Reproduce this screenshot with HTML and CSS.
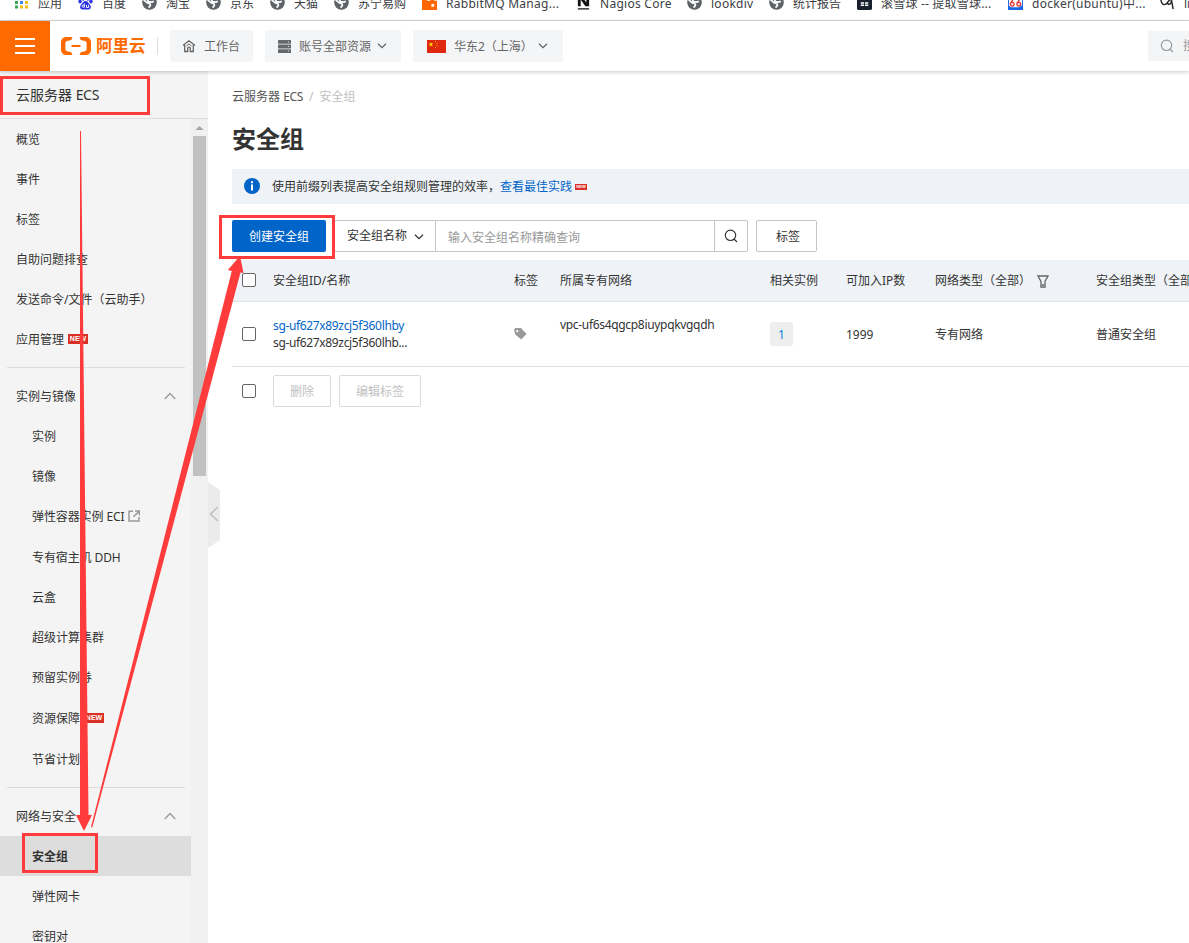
FILE: index.html
```
<!DOCTYPE html>
<html lang="zh-CN">
<head>
<meta charset="utf-8">
<title>安全组</title>
<link rel="stylesheet" href="styles.css">
</head>
<body>
<svg class="defs" width="0" height="0">
  <symbol id="globe" viewBox="0 0 16 16"><circle cx="8" cy="8" r="7.800" fill="#5f6368"/><path d="M1.500 5.500c2 0 2.500 2.500 4.500 3s3 .5 3 2-1.500 1.500-1.500 3M12.500 6.500c-1.500 1.500-3 1-4.500.8S5.500 6 6.500 4.500s2-1 2.500-3" fill="none" stroke="#fff" stroke-width="1.900"/></symbol>
  <symbol id="down" viewBox="0 0 10 6"><path d="M1 .7l4 4 4-4" fill="none" stroke="currentColor" stroke-width="1.300"/></symbol>
  <symbol id="up" viewBox="0 0 12 8"><path d="M.7 7L6 1.500 11.300 7" fill="none" stroke="#999" stroke-width="1.300"/></symbol>
  <symbol id="search" viewBox="0 0 14 14"><circle cx="6.500" cy="6.300" r="5.200" fill="none" stroke="currentColor" stroke-width="1.200"/><path d="M10 10l3 3" stroke="currentColor" stroke-width="1.300"/></symbol>
</svg>

<div class="bookmarks">
  <div class="bm"><svg class="ico" viewBox="0 0 15 15"><path d="M1 1h3v3H1zM1 6h3v3H1zM1 10.500h3v3H1z" fill="#34a853"/><path d="M6 1h3v3H6zM6 6h3v3H6z" fill="#4285f4"/><path d="M6 10.500h3v3H6zM11 1h3v3h-3zM11 6h3v3h-3zM11 10.500h3v3h-3z" fill="#f9b916"/></svg><span>应用</span></div>
  <div class="bm"><svg class="ico" viewBox="0 0 16 16"><g fill="#2b32e1"><ellipse cx="5.500" cy="3.500" rx="1.800" ry="2.500"/><ellipse cx="10.500" cy="3.500" rx="1.800" ry="2.500"/><ellipse cx="2.200" cy="7" rx="1.800" ry="2"/><ellipse cx="13.800" cy="7" rx="1.800" ry="2"/><path d="M8 6.500c2 0 3 2 4.500 3.500 2 2 1.500 5.500-1.500 5.500H5C2 15.500 1.500 12 3.500 10 5 8.500 6 6.500 8 6.500z"/></g><path d="M6.800 9v4H5.500a1 1 0 010-2.300h1M9 10.500v2.800h2.300v-2.800" stroke="#fff" fill="none"/></svg><span>百度</span></div>
  <div class="bm"><svg class="ico"><use href="#globe"/></svg><span>淘宝</span></div>
  <div class="bm"><svg class="ico"><use href="#globe"/></svg><span>京东</span></div>
  <div class="bm"><svg class="ico"><use href="#globe"/></svg><span>天猫</span></div>
  <div class="bm w88"><svg class="ico"><use href="#globe"/></svg><span>苏宁易购</span></div>
  <div class="bm w154"><svg class="ico" viewBox="0 0 16 16"><path d="M0 0h5v6h4V0h4v6h3v10H0z" fill="#f60"/><path d="M10 9.500h3v3h-3z" fill="#fff"/></svg><span class="lat">RabbitMQ Manag...</span></div>
  <div class="bm w111"><svg class="ico" viewBox="0 0 16 16"><path d="M2 1h4l5 7V1h3v11h-4L5 5v7H2zM2 14h12v1.500H2z" fill="#111"/></svg><span class="lat">Nagios Core</span></div>
  <div class="bm w82"><svg class="ico"><use href="#globe"/></svg><span class="lat">lookdiv</span></div>
  <div class="bm w88"><svg class="ico"><use href="#globe"/></svg><span>统计报告</span></div>
  <div class="bm w151"><svg class="ico" viewBox="0 0 16 16"><rect width="16" height="16" rx="2" fill="#17202c"/><path d="M4 8.500h3.500M8.500 8.500H12M4 11h3.500M8.500 11H12" stroke="#fff" stroke-width="1.500"/></svg><span class="snow">滚雪球 -- 提取雪球...</span></div>
  <div class="bm w152"><svg class="ico" viewBox="0 0 16 16"><path d="M0 0h16v16H0z" fill="#1766e5"/><path d="M1 3h14v8l-3 2H3l-2-2z" fill="#fff"/><path d="M6 4L2.500 9c0 4 4 3 4 .5S3 8 2.500 9M13 4L9.500 9c0 4 4 3 4 .5S10 8 9.500 9" fill="none" stroke="#e4393c" stroke-width="1.500"/></svg><span class="lat">docker(ubuntu)中...</span></div>
  <div class="bm"><svg class="ico" viewBox="0 0 16 16"><path d="M1 5c1 7 5 6 7 3l4-5M8 8c0 3 3 2 4 0l0-4 2 11" fill="none" stroke="#222" stroke-width="1.500"/></svg><span>li</span></div>
</div>

<header class="top">
  <div class="burger"><i></i><i></i><i></i></div>
  <div class="logo">
    <svg width="30" height="20" viewBox="0 0 30 20"><g fill="#ff6a00"><path d="M11.500 1H5.500A5 5 0 000 6v8a5 5 0 005.500 5h6l-1.200-2.800-4.300-1a2 2 0 01-1.600-2V6.800A2 2 0 016 4.900l4.300-1zM18.500 1h6A5 5 0 0130 6v8a5 5 0 01-5.500 5h-6l1.200-2.800 4.300-1a2 2 0 001.600-2V6.800A2 2 0 0024 4.900l-4.300-1z"/><path d="M10.500 9h9v2h-9z"/></g></svg>
    <span>阿里云</span>
  </div>
  <div class="chip home"><svg width="14" height="14" viewBox="0 0 14 14"><path d="M1 6.500L7 1.800l6 4.700M2.700 6v6.500h3V9.500a1.300 1.300 0 012.600 0v3h3V6" fill="none" stroke="#666" stroke-width="1.300"/><path d="M4.500 7L7 5l2.500 2" fill="none" stroke="#666"/></svg><span>工作台</span></div>
  <div class="chip account"><svg width="13" height="13" viewBox="0 0 13 13"><g fill="#66686b"><rect width="13" height="3.800" rx=".5"/><rect y="4.600" width="13" height="3.800" rx=".5"/><rect y="9.200" width="13" height="3.800" rx=".5"/></g><path d="M10 2h1M10 6.500h1M10 11h1" stroke="#ddd"/></svg><span>账号全部资源</span><svg class="dn"><use href="#down"/></svg></div>
  <div class="chip region"><svg width="19" height="13" viewBox="0 0 19 13"><path d="M0 0h19v13H0z" fill="#de2910"/><path d="M4 2l.6 1.600h1.700L5 4.700l.5 1.700L4 5.400 2.500 6.400 3 4.700 1.700 3.600h1.700z" fill="#ffde00"/><path d="M8 1.500h1M9.500 3.500h1M9.500 5.500h1M8 7.500h1" stroke="#ffb000"/></svg><span>华东2（上海）</span><svg class="dn"><use href="#down"/></svg></div>
  <div class="find"><svg width="14" height="14"><use href="#search"/></svg><span>搜索</span></div>
</header>

<div class="body">
  <aside>
    <div class="product">云服务器 <span>ECS</span></div>
    <div class="side-row">
      <nav>
        <a>概览</a><a>事件</a><a>标签</a><a>自助问题排查</a><a>发送命令/文件（云助手）</a><a>应用管理<b class="new">NEW</b></a>
        <hr>
        <a class="group">实例与镜像<svg width="12" height="8"><use href="#up"/></svg></a>
        <div class="sub">
          <a>实例</a><a>镜像</a>
          <a class="eci">弹性容器实例 ECI<svg width="12" height="12" viewBox="0 0 12 12"><path d="M5 1.200H1v9.800h10V7" fill="none" stroke="#999" stroke-width="1.500"/><path d="M7 1h4.300v4.300M11 1.200L5.500 6.800" fill="none" stroke="#999" stroke-width="1.500"/></svg></a>
          <a class="tall tight">专有宿主机 DDH</a><a>云盒</a><a>超级计算集群</a><a>预留实例券</a><a class="tall">资源保障<b class="new">NEW</b></a><a class="tall">节省计划</a>
        </div>
        <hr class="second">
        <a class="group">网络与安全<svg width="12" height="8"><use href="#up"/></svg></a>
        <div class="sub"><a class="active">安全组</a><a>弹性网卡</a><a>密钥对</a></div>
      </nav>
      <div class="scroll"><svg width="17" height="17" viewBox="0 0 17 17"><path d="M4.500 11l4-4 4 4z" fill="#a3a3a3"/></svg><div class="thumb"></div></div>
    </div>
  </aside>
  <svg class="fold" width="12" height="66" viewBox="0 0 12 66"><path d="M0 0l12 8v50L0 66z" fill="#ebebeb"/><path d="M10 25L2.500 32 10 39" fill="none" stroke="#bbb" stroke-width="1.300"/></svg>

  <main>
    <div class="crumb">云服务器 <span>ECS</span><i>/</i><em>安全组</em></div>
    <h1>安全组</h1>
    <div class="notice"><svg width="16" height="16" viewBox="0 0 16 16"><circle cx="8" cy="8" r="8" fill="#0064c8"/><path d="M7 3.200h2v2H7zM7 6.500h2v6H7z" fill="#fff"/></svg><span>使用前缀列表提高安全组规则管理的效率，</span><a>查看最佳实践</a><b class="new mini">NEW</b></div>
    <div class="tools">
      <button class="primary">创建安全组</button>
      <div class="select">安全组名称<svg class="dn"><use href="#down"/></svg></div>
      <div class="input">输入安全组名称精确查询</div>
      <div class="go"><svg width="14" height="14"><use href="#search"/></svg></div>
      <button class="tagbtn">标签</button>
    </div>
    <div class="grid head">
      <i class="box"></i><span>安全组ID/名称</span><span>标签</span><span>所属专有网络</span><span>相关实例</span><span>可加入IP数</span>
      <span class="filter">网络类型（全部）<svg width="12" height="13" viewBox="0 0 12 13"><path d="M1 1h10L8 6.500V12H4V6.500z" fill="none" stroke="#666" stroke-width="1.300"/><path d="M3.500 9h5v3.500h-5z" fill="#888"/></svg></span><span>安全组类型（全部）</span>
    </div>
    <div class="grid data">
      <i class="box"></i>
      <span class="ids"><a>sg-uf627x89zcj5f360lhby</a><br>sg-uf627x89zcj5f360lhb...</span>
      <span class="tag"><svg width="13" height="12" viewBox="0 0 13 12"><path d="M1.500 0H7l5.500 6L7.200 11.500 1.300 6.500 0 1.500z" fill="#999"/><circle cx="3.300" cy="3.200" r="1.100" fill="#fff"/></svg></span>
      <span class="vpc">vpc-uf6s4qgcp8iuypqkvgqdh</span><span><b class="count">1</b></span><span class="cell">1999</span><span class="cell">专有网络</span><span class="cell">普通安全组</span>
    </div>
    <div class="batch"><i class="box"></i><button>删除</button><button>编辑标签</button></div>
  </main>
</div>

<svg class="marks" width="1189" height="943" viewBox="0 0 1189 943">
  <g fill="none" stroke="#ff3b3b" stroke-width="3"><path d="M1.500 77.500h147v36H1.500zM220.500 216.500h113v41h-113zM23.500 834.500h73v37h-73z"/></g>
  <g fill="#ff3b3b"><path d="M80 131h1l7.500 684H92l-8 16-8-16h4z"/><path d="M91 827L231.800 271l-4-1L240 256l3.500 17-3-.5L92.300 827.500z"/></g>
</svg>
</body>
</html>
```
FILE: styles.css
```
* { box-sizing: border-box; }
body { margin: 0; width: 1189px; height: 943px; overflow: hidden; position: relative; background: #fff; color: #333; font: 12px/16px "Noto Sans", "Noto Sans CJK SC", sans-serif; display: flex; flex-direction: column; white-space: nowrap; }
svg { display: block; flex: none; }
.defs { position: absolute; }
i, em { font-style: normal; }
button { font: inherit; padding: 0; margin: 0; }
.dn { width: 10px; height: 6px; }

.bookmarks { height: 21px; flex: none; border-bottom: 1px solid #d5d7da; display: flex; align-items: flex-start; padding-left: 14px; overflow: hidden; color: #3c4043; }
.bm { width: 64px; flex: none; display: flex; gap: 9px; margin-top: -6px; height: 18px; align-items: center; }
.bm .ico { width: 15px; height: 15px; margin-top: -2px; }
.bm span { padding-top: 1px; }
.w88 { width: 88px; }
.w154 { width: 154px; }
.w111 { width: 111px; }
.w82 { width: 82px; }
.w151 { width: 151px; }
.w152 { width: 152px; }
.lat { letter-spacing: .27px; }
.snow { letter-spacing: .2px; }

.top { height: 50px; flex: none; display: flex; align-items: center; position: relative; z-index: 1; background: #fff; box-shadow: 0 1px 4px rgba(0,0,0,.22); }
.burger { width: 50px; height: 50px; background: #ff6a00; display: flex; flex-direction: column; gap: 5px; justify-content: center; align-items: center; }
.burger i { width: 20px; height: 2px; background: #fff; }
.logo { display: flex; align-items: center; gap: 5px; width: 97px; margin-left: 11px; color: #ff6a00; font-size: 16.500px; font-weight: 600; border-right: 1px solid #ddd; height: 18px; }
.chip { height: 32px; background: #f4f5f7; border-radius: 2px; display: flex; align-items: center; color: #666; margin-left: 12px; }
.chip span { padding-top: 2px; }
.home { width: 83px; padding-left: 12px; gap: 8px; }
.account { width: 136px; padding-left: 13px; gap: 8px; }
.account .dn { margin-left: -2px; }
.region { width: 150px; padding-left: 14px; gap: 8px; }
.region .dn { margin-left: -3px; }
.find { margin-left: auto; width: 41px; height: 30px; background: #f4f5f7; display: flex; align-items: center; gap: 9px; padding-left: 12px; overflow: hidden; color: #999; }

.body { flex: 1; min-height: 0; display: flex; position: relative; }
aside { width: 208px; flex: none; background: #f4f4f4; display: flex; flex-direction: column; }
.product { height: 48px; flex: none; border-bottom: 1px solid #ddd; padding: 14px 16px; font-size: 14px; line-height: 20px; }
.product span { letter-spacing: -.3px; }
.side-row { display: flex; flex: 1; min-height: 0; }
nav { width: 191px; overflow: hidden; flex: none; }
nav a { display: flex; align-items: center; height: 40px; padding: 2px 0 0 16px; flex: none; }
nav hr { margin: 8px 6px 8px 7px; border: 0; border-top: 1px solid #ddd; }
nav .group { justify-content: space-between; padding-right: 15px; }
.group svg { margin-top: -2px; }
.sub a { padding-left: 32px; }
.sub .eci { gap: 4px; letter-spacing: -.1px; }
.eci svg { margin-top: -2px; }
.sub .tall { height: 41px; }
.tight { letter-spacing: -.1px; }
.sub .active { background: #ddd; font-weight: 700; }
.new { background: #d93026; color: #fff; font: 700 7px/10px "Liberation Sans", sans-serif; width: 20px; height: 10px; text-align: center; margin: -2px 0 0 4px; }
.scroll { width: 17px; background: #f0f0f0; }
.thumb { width: 13px; height: 340px; margin-left: 2px; background: #c1c1c1; }
.fold { position: absolute; left: 208px; top: 411px; }

main { flex: 1; min-width: 0; margin-left: 24px; overflow: hidden; }
.crumb { margin-top: 18px; height: 16px; color: #555; }
.crumb span { letter-spacing: -.3px; }
.crumb i { color: #bbb; margin: 0 6px; }
.crumb em { color: #c1c1c1; }
h1 { font-size: 24px; line-height: 36px; margin: 16px 0 0; height: 48px; }
.notice { height: 35px; background: #eff3f8; display: flex; align-items: center; padding-left: 12px; }
.notice svg { margin-top: -1px; }
.notice span { margin-left: 12px; }
a { color: inherit; }
.notice a, .ids a { color: #0064c8; }
.notice .mini { font-size: 4px; line-height: 6px; width: 12px; height: 6px; margin: 0 0 0 3px; }
.tools { margin-top: 16px; display: flex; height: 32px; }
.primary { width: 94px; background: #0064c8; color: #fff; border: 0; border-radius: 2px; margin-right: 8px; padding-top: 1px; }
.select { width: 102px; border: 1px solid #c0c6cc; border-radius: 2px 0 0 2px; display: flex; align-items: center; padding-left: 12px; gap: 7px; }
.select .dn { margin-top: 1px; }
.input { width: 279px; border: 1px solid #c0c6cc; border-left: 0; line-height: 33px; padding-left: 12px; color: #999; }
.go { width: 33px; border: 1px solid #c0c6cc; border-left: 0; border-radius: 0 2px 2px 0; display: flex; align-items: center; justify-content: center; }
.tagbtn { width: 61px; margin-left: 8px; background: #fff; border: 1px solid #c0c6cc; border-radius: 2px; padding: 2px 0 0 3px; color: #333; }
.grid { display: grid; grid-template-columns: 31px 241px 46px 210px 76px 89px 161px 110px; padding-left: 10px; align-items: center; }
.head { height: 42px; margin-top: 8px; background: #eff3f8; border-bottom: 1px solid #dee3e9; }
.head span { padding-top: 1px; }
.head .box { margin-top: -1px; }
.data { height: 65px; border-bottom: 1px solid #dcdee3; }
.box { width: 14px; height: 14px; border: 1px solid #666; border-radius: 2px; background: #fff; }
.filter { display: flex; align-items: center; gap: 6px; }
.ids { line-height: 17px; letter-spacing: -.35px; margin-top: -1px; }
.vpc { margin-top: -18px; letter-spacing: -.32px; }
.cell { padding-top: 2px; }
.count { display: block; width: 23px; height: 24px; background: #eee; border-radius: 3px; color: #0088dd; font-weight: 400; line-height: 25px; text-align: center; }
.batch { display: flex; align-items: center; padding: 8px 10px; height: 48px; }
.batch button { height: 32px; width: 58px; margin-left: 17px; padding-top: 2px; border: 1px solid #d8dadd; border-radius: 2px; background: #fff; color: #c1c1c1; }
.batch button + button { width: 82px; margin-left: 8px; }
.marks { position: absolute; left: 0; top: 0; z-index: 5; }
```
